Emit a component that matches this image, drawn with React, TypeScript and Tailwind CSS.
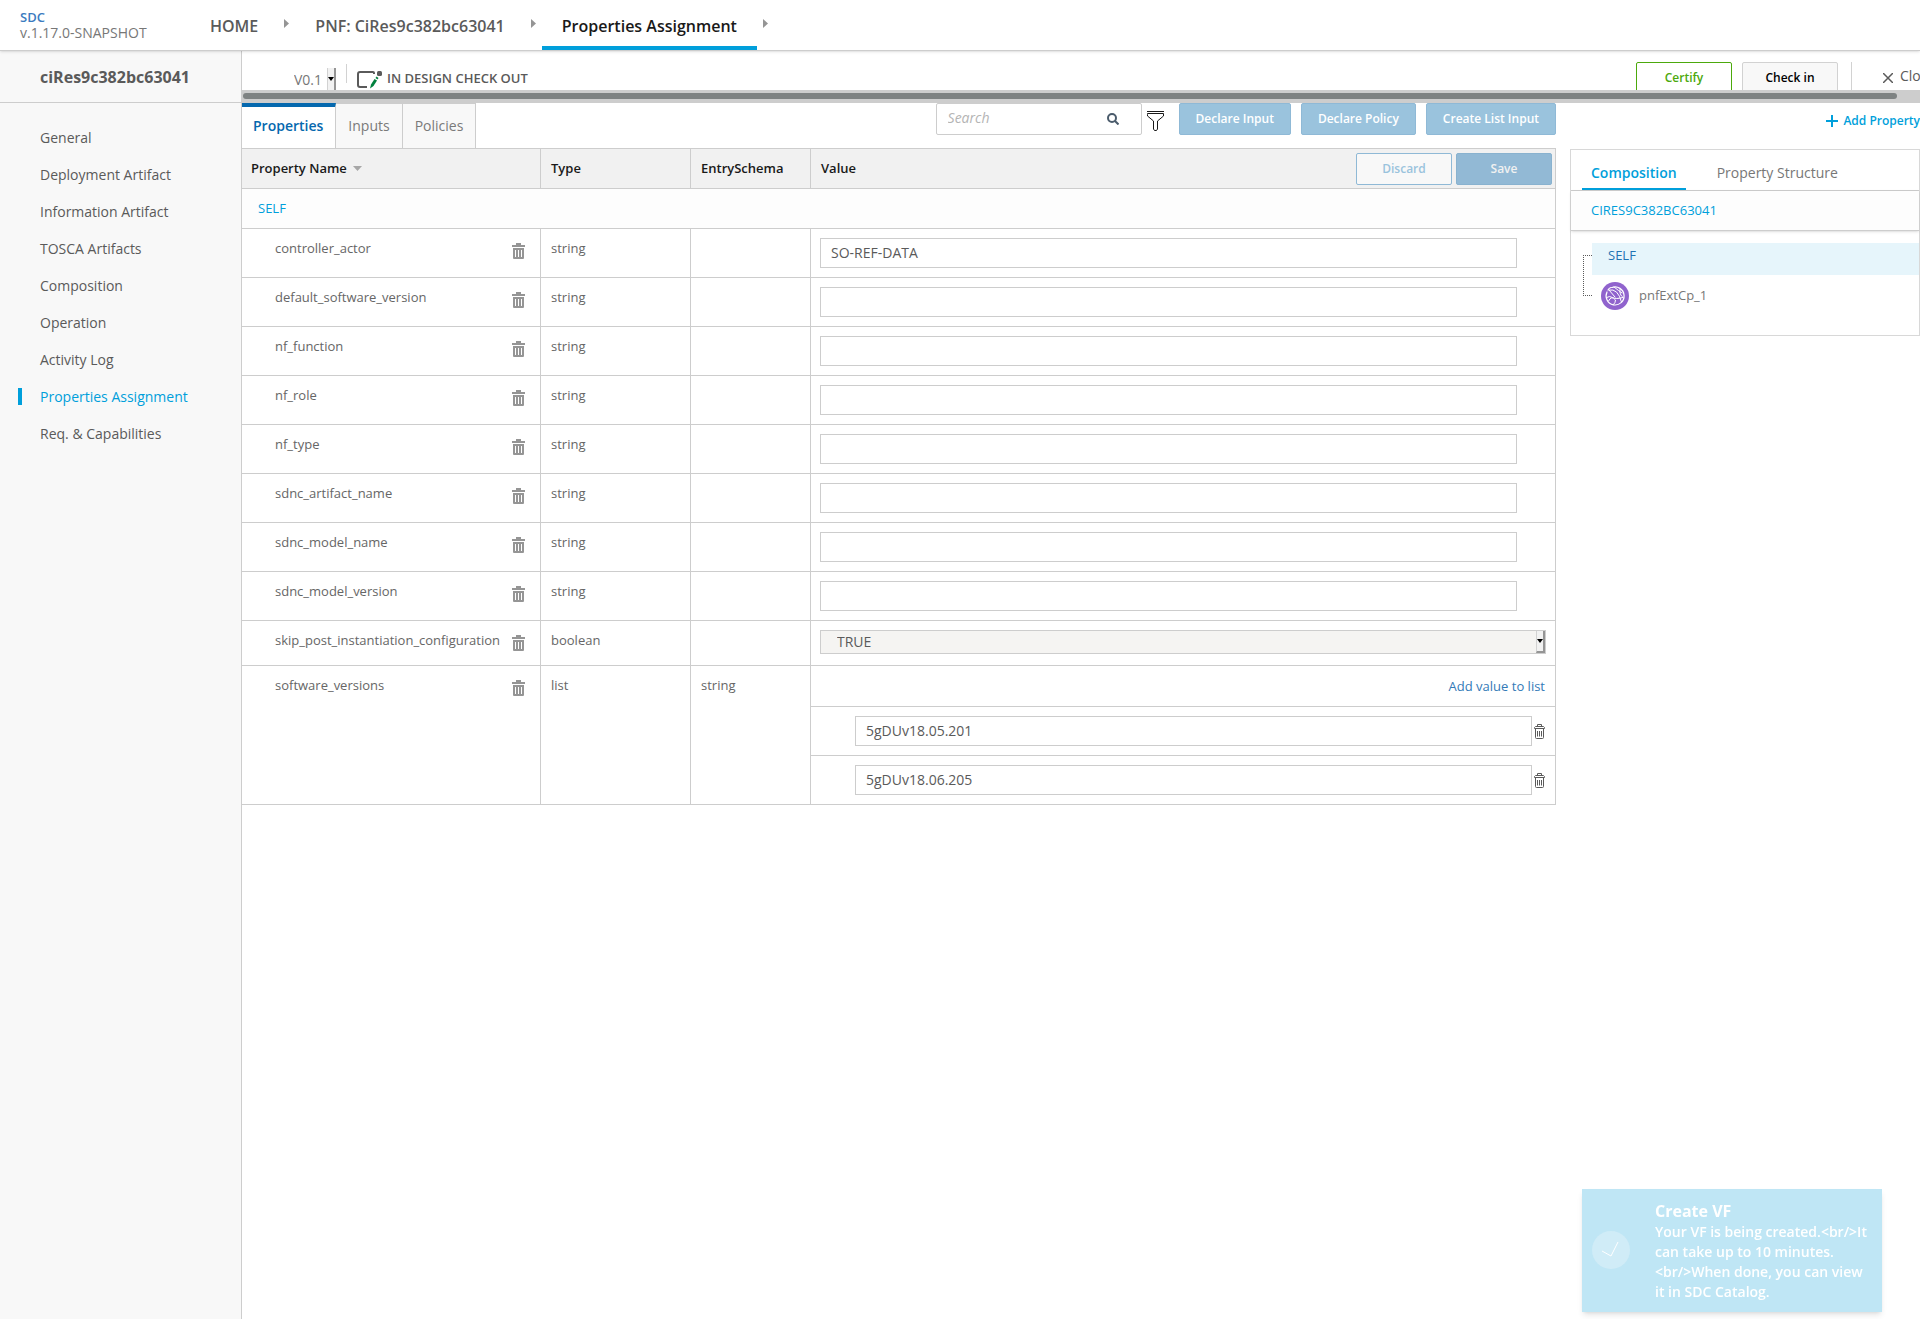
import React, { useState } from 'react';

interface PropertyRow {
    name: string;
    type: string;
    schema?: string;
    value?: string;
}

const menuItems = [
    'General',
    'Deployment Artifact',
    'Information Artifact',
    'TOSCA Artifacts',
    'Composition',
    'Operation',
    'Activity Log',
    'Properties Assignment',
    'Req. & Capabilities'
];

const breadcrumbs = ['HOME', 'PNF: CiRes9c382bc63041', 'Properties Assignment'];

const stringRows: PropertyRow[] = [
    { name: 'controller_actor', type: 'string', value: 'SO-REF-DATA' },
    { name: 'default_software_version', type: 'string' },
    { name: 'nf_function', type: 'string' },
    { name: 'nf_role', type: 'string' },
    { name: 'nf_type', type: 'string' },
    { name: 'sdnc_artifact_name', type: 'string' },
    { name: 'sdnc_model_name', type: 'string' },
    { name: 'sdnc_model_version', type: 'string' }
];

const softwareVersions = ['5gDUv18.05.201', '5gDUv18.06.205'];

const TrashSolid: React.FC = () => (
    <svg width="13" height="16" viewBox="0 0 13 16" fill="#959595" aria-hidden="true">
        <path d="M4 0h5v2h4v2H0V2h4z" />
        <path fillRule="evenodd" d="M1 5h11v10q0 1-1 1H2q-1 0-1-1zM3 7v7h1V7zM6 7v7h1V7zM9 7v7h1V7z" />
    </svg>
);

const TrashOutline: React.FC = () => (
    <svg width="11" height="15" viewBox="0 0 11 15" fill="none" stroke="#5a5a5a" aria-hidden="true">
        <path d="M3.5 2.5v-2h4v2M.5 4.5v-1l1-1h8l1 1v1zM1.5 4.5v9q0 1 1 1h6q1 0 1-1v-9M3.5 7v5.5M5.5 7v5.5M7.5 7v5.5" />
    </svg>
);

// Old style drop-down button at the right end of a select
const SelectArrow: React.FC = () => (
    <span className="pointer-events-none absolute inset-y-px right-px flex w-[9px] items-center justify-center border-r-2 border-b-2 border-l border-r-[#959595] border-b-[#959595] border-l-[#d2d2d2] bg-[#f2f2f2]">
        <svg width="6" height="4" viewBox="0 0 6 4" className="shrink-0" aria-hidden="true">
            <path d="M0 0h6L3 4z" fill="#000" />
        </svg>
    </span>
);

const CrumbArrow: React.FC = () => (
    <span className="flex w-[17px] justify-center pt-[19px]">
        <svg width="5" height="9" viewBox="0 0 5 9" aria-hidden="true">
            <path d="M0 0l5 4.5L0 9z" fill="#959595" />
        </svg>
    </span>
);

const Header: React.FC = () => (
    <header className="relative z-10 flex h-[51px] border-b border-[#cdcdcd] bg-white shadow-sm">
        <div className="w-[190px] pt-[10px] pl-5 leading-[15px]">
            <a href="#sdc" className="block text-[13px] font-semibold text-[#3b7bbf]">SDC</a>
            <div className="text-sm leading-[15px] text-[#777777]">v.1.17.0-SNAPSHOT</div>
        </div>
        <nav className="flex text-base">
            {breadcrumbs.map((crumb, i) => (
                <div key={crumb} className="flex">
                    <a
                        href="#crumb"
                        className={`px-5 pt-[14px] leading-6 font-semibold ${i === 2 ? 'border-b-4 border-[#009fdb] text-[#191919]' : 'text-[#5a5a5a]'}`}
                    >
                        {crumb}
                    </a>
                    <CrumbArrow />
                </div>
            ))}
        </nav>
    </header>
);

const Sidebar: React.FC = () => (
    <aside className="w-[242px] shrink-0 border-r border-[#cdcdcd] bg-[#f8f8f8] text-[#5a5a5a]">
        <div className="flex h-[52px] items-center border-b border-[#cdcdcd] pl-10 text-base font-bold">
            ciRes9c382bc63041
        </div>
        <nav className="flex flex-col pt-4 text-sm">
            {menuItems.map(item => (
                <a
                    key={item}
                    href="#menu"
                    className={`flex h-[37px] items-center ${item === 'Properties Assignment' ? 'text-[#009fdb]' : ''}`}
                >
                    <span className={`mr-[18px] ml-[18px] h-[17px] w-1 ${item === 'Properties Assignment' ? 'bg-[#009fdb]' : ''}`} />
                    {item}
                </a>
            ))}
        </nav>
    </aside>
);

const Toolbar: React.FC = () => (
    <div>
        <div className="flex h-[39px] items-start overflow-hidden text-[#5a5a5a]">
            <div className="relative mt-4 ml-12 w-[47px]">
                <select aria-label="Version" className="h-[24px] w-full appearance-none pb-[2px] pl-1 text-sm text-[#777777]">
                    <option>V0.1</option>
                </select>
                <SelectArrow />
            </div>
            <span className="mt-[13px] ml-[9px] h-[19px] w-px bg-[#d2d2d2]" />
            <svg width="25" height="18" viewBox="0 0 25 18" fill="none" className="mt-5 ml-[10px]" aria-hidden="true">
                <path d="M17 3V2q0-1-1-1H3Q1 1 1 3v11q0 2 2 2h7" stroke="#5a5a5a" strokeWidth="2" />
                <path d="M13 17.5l1-4 3.5-5.500 2.500 1.500-3.500 5.500z" fill="#00813e" />
                <path d="M18.500 7l1-1.500 2 1.500-1 1.500z" fill="#00813e" />
                <rect x="20" y="0" width="5" height="5" rx="1.500" fill="#5a5a5a" />
            </svg>
            <span className="mt-[17px] ml-[5px] text-[13px] leading-5 font-semibold">IN DESIGN CHECK OUT</span>
            <div className="ml-auto flex items-start text-xs font-semibold">
                <button className="mt-[11px] h-8 w-24 rounded-xs border border-[#4ca90c] bg-white text-[#4ca90c]">Certify</button>
                <button className="mt-[11px] ml-[10px] h-8 w-24 rounded-xs border border-[#d2d2d2] bg-[#f8f8f8] text-black">Check in</button>
                <span className="mt-[11px] ml-[13px] h-8 w-px bg-[#d2d2d2]" />
                <button className="mt-[13px] ml-[31px] flex w-[37px] items-center gap-[7px] overflow-hidden text-sm leading-6 font-normal">
                    <svg width="10" height="10" viewBox="0 0 10 10" className="mt-[3px] shrink-0" stroke="#5a5a5a" strokeWidth="1.5" aria-hidden="true">
                        <path d="M0 0l10 10M10 0L0 10" />
                    </svg>
                    Close
                </button>
            </div>
        </div>
        <div className="h-[13px] bg-[#cdcdcd] pt-[3px] pr-[23px] pl-px">
            <div className="h-[6px] rounded-full bg-[#7e8282]" />
        </div>
    </div>
);

const PropertyCells: React.FC<{ row: PropertyRow }> = ({ row }) => (
    <>
        <td className="border-r border-b border-[#cdcdcd] p-0 align-top">
            <div className="flex justify-between pr-[15px] pl-[33px]">
                <span className="pt-[9px] leading-5">{row.name}</span>
                <button aria-label={`Delete ${row.name}`} className="pt-[14px]">
                    <TrashSolid />
                </button>
            </div>
        </td>
        <td className="border-r border-b border-[#cdcdcd] px-[10px] pt-[9px] pb-0 align-top leading-5">{row.type}</td>
        <td className="border-r border-b border-[#cdcdcd] px-[10px] pt-[9px] pb-0 align-top leading-5">{row.schema}</td>
    </>
);

const PropertiesTable: React.FC = () => (
    <table className="w-full table-fixed border-separate border-spacing-0 border-t border-[#cdcdcd] text-[13px] text-[#666666]">
        <colgroup>
            <col className="w-[299px]" />
            <col className="w-[150px]" />
            <col className="w-[120px]" />
            <col />
        </colgroup>
        <thead>
            <tr className="h-10 bg-[#f1f1f1] text-left text-[#191919]">
                <th className="border-r border-b border-[#cdcdcd] p-0 pl-[9px] font-semibold">
                    <span className="flex items-center gap-[6px]">
                        Property Name
                        <svg width="9" height="5" viewBox="0 0 9 5" aria-hidden="true">
                            <path d="M0 0h9L4.5 5z" fill="#a7a7a7" />
                        </svg>
                    </span>
                </th>
                <th className="border-r border-b border-[#cdcdcd] p-0 pl-[10px] font-semibold">Type</th>
                <th className="border-r border-b border-[#cdcdcd] p-0 pl-[10px] font-semibold">EntrySchema</th>
                <th className="border-r border-b border-[#cdcdcd] p-0 pr-[3px] pl-[10px] font-semibold">
                    <div className="flex items-center">
                        <span className="mr-auto">Value</span>
                        <button className="mr-1 h-8 w-24 rounded-xs border border-[#8fb9d6] bg-[#f8f8f8] text-xs text-[#9ac3dd]">Discard</button>
                        <button className="h-8 w-24 rounded-xs border border-[#89b2cf] bg-[#92b9d5] text-xs text-[#f1f1f1]">Save</button>
                    </div>
                </th>
            </tr>
        </thead>
        <tbody>
            <tr className="h-10 bg-[#fdfdfd]">
                <td colSpan={4} className="border-r border-b border-[#cdcdcd] p-0 pl-4 text-[#009fdb]">SELF</td>
            </tr>
            {stringRows.map(row => (
                <tr key={row.name}>
                    <PropertyCells row={row} />
                    <td className="border-r border-b border-[#cdcdcd] py-[9px] pr-[38px] pl-[9px]">
                        <input
                            aria-label={row.name}
                            defaultValue={row.value}
                            className="block h-[30px] w-full border border-[#cdcdcd] px-[10px] pb-[2px] text-sm text-[#5a5a5a]"
                        />
                    </td>
                </tr>
            ))}
            <tr className="h-[45px]">
                <PropertyCells row={{ name: 'skip_post_instantiation_configuration', type: 'boolean' }} />
                <td className="border-r border-b border-[#cdcdcd] p-[9px] pb-0 align-top">
                    <div className="relative">
                        <select
                            aria-label="skip_post_instantiation_configuration"
                            className="block h-6 w-full appearance-none border border-[#cdcdcd] bg-[#f5f4f2] px-4 text-sm leading-5 text-[#5a5a5a]"
                        >
                            <option>TRUE</option>
                            <option>FALSE</option>
                        </select>
                        <SelectArrow />
                    </div>
                </td>
            </tr>
            <tr>
                <PropertyCells row={{ name: 'software_versions', type: 'list', schema: 'string' }} />
                <td className="border-r border-b border-[#cdcdcd] p-0">
                    <div className="flex h-10 items-center justify-end pt-[2px] pr-[10px]">
                        <a href="#add" className="text-[#337ab7]">Add value to list</a>
                    </div>
                    {softwareVersions.map(version => (
                        <div key={version} className="flex items-center border-t border-[#cdcdcd] py-[9px] pr-[10px] pl-[44px]">
                            <input
                                aria-label="software_versions"
                                defaultValue={version}
                                className="h-[30px] min-w-0 flex-1 border border-[#cdcdcd] px-[10px] pb-[2px] text-sm text-[#5a5a5a]"
                            />
                            <button aria-label={`Delete ${version}`} className="ml-[2px]">
                                <TrashOutline />
                            </button>
                        </div>
                    ))}
                </td>
            </tr>
        </tbody>
    </table>
);

const PropertiesSection: React.FC = () => {
    const [search, setSearch] = useState('');

    return (
        <section className="min-w-0 flex-1">
            <div className="flex h-[45px] items-start">
                <div className="flex h-full text-sm text-[#7a7a7a]">
                    <button className="border-t-4 border-r border-t-[#0568ae] border-r-[#cdcdcd] pr-3 pb-[3px] pl-[11px] font-semibold text-[#0568ae]">Properties</button>
                    <button className="border-t border-r border-[#cdcdcd] bg-[#f8f8f8] px-3">Inputs</button>
                    <button className="border-t border-r border-[#cdcdcd] bg-[#f8f8f8] px-3">Policies</button>
                </div>
                <div className="ml-auto flex h-8 w-[206px] items-center rounded-xs border border-[#cdcdcd] pr-[22px] pl-[11px]">
                    <input
                        type="text"
                        aria-label="Search"
                        placeholder="Search"
                        value={search}
                        onChange={e => setSearch(e.target.value)}
                        className="min-w-0 flex-1 pb-[2px] text-sm outline-none placeholder:text-[#b4b4b4] placeholder:italic"
                    />
                    <svg width="12" height="12" viewBox="0 0 12 12" fill="none" stroke="#4a5b6b" strokeWidth="2" aria-hidden="true">
                        <circle cx="5" cy="5" r="4" />
                        <path d="M8 8l3.5 3.5" />
                    </svg>
                </div>
                <button aria-label="Filter" className="mt-2 ml-[5px]">
                    <svg width="17" height="20" viewBox="0 0 17 20" fill="none" stroke="#191919" aria-hidden="true">
                        <path d="M0 .5h17M.5 3.5V2.5h16V5L10.500 10v8l-1 1.500H7.500L6.500 18v-8L.5 5z" />
                    </svg>
                </button>
                <div className="ml-[15px] flex gap-[10px] text-xs font-semibold text-white">
                    <button className="h-8 rounded-xs border border-[#8fb9d6] bg-[#9ac3dd] px-4">Declare Input</button>
                    <button className="h-8 rounded-xs border border-[#8fb9d6] bg-[#9ac3dd] px-4">Declare Policy</button>
                    <button className="h-8 rounded-xs border border-[#8fb9d6] bg-[#9ac3dd] px-4">Create List Input</button>
                </div>
            </div>
            <PropertiesTable />
        </section>
    );
};

const CompositionPanel: React.FC = () => (
    <section className="w-[350px] shrink-0">
        <div className="flex h-[46px] justify-end pt-2">
            <button className="flex h-5 items-center gap-[5px] text-xs font-semibold text-[#009fdb]">
                <svg width="12" height="12" viewBox="0 0 12 12" stroke="#009fdb" strokeWidth="2" aria-hidden="true">
                    <path d="M6 0v12M0 6h12" />
                </svg>
                Add Property
            </button>
        </div>
        <div className="h-[187px] border border-[#d8d8d8]">
            <div className="flex h-[41px] border-b border-[#cdcdcd] pl-[11px] text-sm">
                <button className="border-b-2 border-[#009fdb] px-[9px] pt-2 font-semibold text-[#009fdb]">Composition</button>
                <button className="ml-[22px] px-[9px] pt-[6px] text-[#777777]">Property Structure</button>
            </div>
            <div className="flex h-10 items-center border-b border-[#cdcdcd] bg-[#fdfdfd] pl-5 text-[13px] text-[#009fdb] shadow-sm">
                CIRES9C382BC63041
            </div>
            <div className="flex pt-3 pl-3 text-[13px]">
                <span className="mt-3 h-[41px] w-[9px] border border-r-0 border-dotted border-[#5a5a5a]" />
                <div className="flex-1">
                    <div className="h-8 bg-[#e6f5fb] pt-[2px] pl-4 leading-5 text-[#1f73b3]">SELF</div>
                    <div className="mt-[7px] flex items-center gap-[10px] pl-[9px] text-[#777777]">
                        <svg width="28" height="28" viewBox="0 0 28 28" fill="none" stroke="#fff" strokeLinecap="round" aria-hidden="true">
                            <circle cx="14" cy="14" r="14" fill="#9063cd" stroke="none" />
                            <path d="M11 5.500A9 9 0 1 1 6 10M7 8q1-2 3-2.500" strokeWidth="1.200" />
                            <path d="M8 8q9-2 12.500 12M13 5q5 4 8 6M19 7.500q-1 5 3 8M5.500 15.500q3-2 6 0t10.500 0M7.500 19q3-6 7-1 0 3-2 4.500M8 8l6 7" />
                        </svg>
                        pnfExtCp_1
                    </div>
                </div>
            </div>
        </div>
    </section>
);

const Toast: React.FC = () => (
    <div role="status" className="fixed right-[38px] bottom-[7px] flex h-[123px] w-[300px] bg-[#bfe6f5] text-sm font-semibold text-white shadow-md">
        <svg width="38" height="38" viewBox="0 0 38 38" fill="none" className="mt-[42px] ml-[10px] shrink-0" aria-hidden="true">
            <circle cx="19" cy="19" r="19" fill="#d0ecf7" />
            <path d="M10 20l9 5 7-14" stroke="#fff" />
        </svg>
        <div className="mt-[11px] ml-[25px] leading-5">
            <div className="text-base leading-[22px] font-bold">Create VF</div>
            <p className="w-[217px]">{'Your VF is being created.<br/>It can take up to 10 minutes.<br/>When done, you can view it in SDC Catalog.'}</p>
        </div>
    </div>
);

const App: React.FC = () => (
    <div className="flex min-h-screen flex-col bg-white font-['Open_Sans',sans-serif]">
        <Header />
        <div className="flex flex-1">
            <Sidebar />
            <main className="min-w-0 flex-1">
                <Toolbar />
                <div className="flex gap-[14px]">
                    <PropertiesSection />
                    <CompositionPanel />
                </div>
            </main>
        </div>
        <Toast />
    </div>
);

export default App;
